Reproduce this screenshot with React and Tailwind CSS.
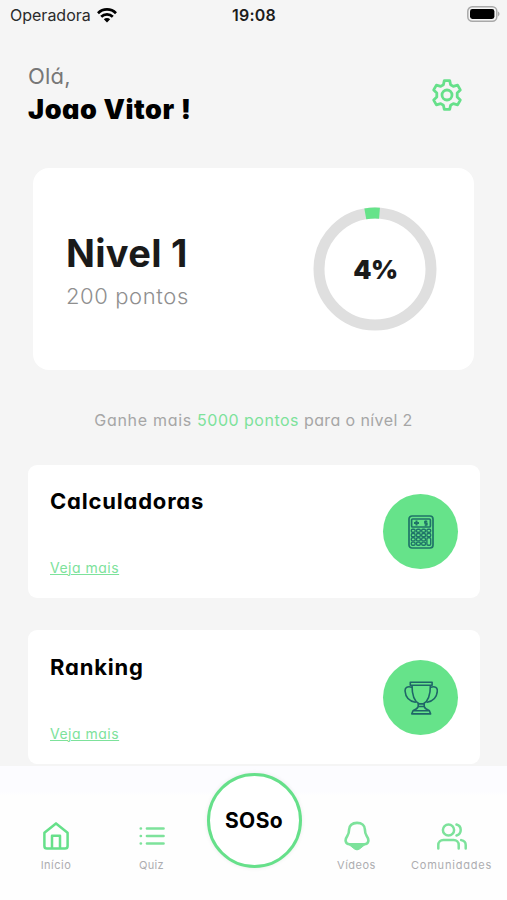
import React from "react";

function Wifi() {
  return (
    <svg width="20" height="15" viewBox="0 0 20 15" fill="none" stroke="#000" strokeWidth="2.7">
      <path d="M1 5.2a12.7 12.7 0 0 1 18 0" />
      <path d="M4.2 8.8a8.2 8.2 0 0 1 11.6 0" />
      <path d="M10 14.6 6.8 11.3a4.6 4.6 0 0 1 6.4 0Z" fill="#000" stroke="none" />
    </svg>
  );
}

function Battery() {
  return (
    <svg width="34" height="16" viewBox="0 0 34 16" fill="none">
      <rect x="1.8" y="0.8" width="29" height="14.4" rx="4.5" stroke="#a9a9a9" strokeWidth="1.5" />
      <rect x="4" y="3" width="24.4" height="10" rx="2.4" fill="#000" />
      <path d="M32 5.6v4.8c2-.9 2-3.900 0-4.800Z" fill="#a9a9a9" />
    </svg>
  );
}

function Gear() {
  return (
    <svg width="32" height="32" viewBox="0 0 32 32" fill="none" stroke="#66e08a" strokeWidth="2.8" strokeLinejoin="round">
      <path d="M13.3 1.6h5.4l.9 4.2 2.7 1.6 4.3-1.3 2.7 4.8-3.1 3v4.2l3.1 3-2.7 4.800-4.300-1.300-2.700 1.600-.9 4.200h-5.400l-.9-4.200-2.700-1.600-4.300 1.300-2.700-4.800 3.100-3v-4.200l-3.100-3 2.700-4.800 4.300 1.300 2.700-1.600Z" />
      <circle cx="16" cy="16" r="5" />
    </svg>
  );
}

function Calculator() {
  return (
    <svg width="26" height="34" viewBox="0 0 26 34" fill="none" stroke="#1f7468" strokeWidth="1.7">
      <rect x="1" y="1" width="24" height="32" rx="3" />
      <rect x="3.6" y="4" width="18.8" height="8" rx="1" />
      <path d="M6 8h5M8.5 5.6v4.8" strokeWidth="2" />
      <path d="M19.3 6.3h-2.6v1.8h2.4v1.9h-2.6M17.9 5.2v6" strokeWidth="1.2" />
      {[15.7, 20, 24.3, 28.6].map((y) =>
        [5.2, 10.4, 15.6, 20.8].map((x) =>
          x === 20.8 && y > 22 ? null : (
            <rect key={x + "-" + y} x={x - 1.9} y={y - 1.5} width="3.8" height="3.1" rx="1.2" strokeWidth="1.4" />
          )
        )
      )}
      <rect x="18.9" y="22.8" width="3.8" height="7.400" rx="1.2" strokeWidth="1.4" />
    </svg>
  );
}

function Trophy() {
  return (
    <svg width="34" height="34" viewBox="0 0 34 34" fill="none" stroke="#1f6668" strokeWidth="1.6" strokeLinejoin="round" strokeLinecap="round">
      <path d="M6.3 1.2h21.8v3H6.3zM8 4.2c0 8 1.200 15.500 7 18.600h4.400c5.800-3.100 7-10.600 7-18.600" />
      <path d="M7.600 6.200C3.200 5 .8 6.700 1.100 10.200c.4 5.400 4 9.800 10.200 11M26.800 6.200c4.400-1.200 6.800.5 6.500 4-.4 5.400-4 9.800-10.200 11" />
      <path d="M14.200 22.800h6v2.700h-6zM14.200 25.500c-.5 2.200-2.500 3-5.200 4.200h16.400c-2.700-1.200-4.700-2-5.200-4.200M9 29.700h16.400l1.200 3.200H7.800z" />
    </svg>
  );
}

function Home() {
  return (
    <svg width="26" height="28" viewBox="0 0 26 28" fill="none" stroke="#66e08a" strokeWidth="2.500" strokeLinejoin="round">
      <path d="M1.400 10.700 13 1.400l11.600 9.300v13.300a2.600 2.600 0 0 1-2.600 2.600H4A2.600 2.600 0 0 1 1.400 24Z" />
      <path d="M9 26.600V13.700h8v12.900" />
    </svg>
  );
}

function List() {
  return (
    <svg width="26" height="20" viewBox="0 0 26 20" fill="none" stroke="#7de29b" strokeWidth="2.700" strokeLinecap="round">
      <path d="M8 2.500h16.500M8 10h16.500M8 17.500h16.500M1.800 2.500h.1M1.800 10h.1M1.800 17.500h.1" />
    </svg>
  );
}

function Bell() {
  return (
    <svg width="26" height="30" viewBox="0 0 26 30" fill="none" stroke="#7de29b" strokeWidth="2.600" strokeLinejoin="round">
      <path d="M13 1.900c-4.900 0-7.900 2.700-7.900 6.700 0 3.300-.5 4.600-1.800 6.500-1.400 2-2 3.500-1.600 5.200.4 1.900 1.900 2.900 3.900 2.900h14.800c2 0 3.500-1 3.900-2.900.4-1.700-.2-3.200-1.600-5.200-1.300-1.900-1.800-3.200-1.800-6.500 0-4-3-6.700-7.900-6.700Z" />
      <path d="M4.500 23.200h17L15.500 28q-2.500 1.800-5 0Z" fill="#7de29b" strokeWidth="1" />
    </svg>
  );
}

function Users() {
  return (
    <svg width="30" height="27" viewBox="0 0 30 27" fill="none" stroke="#7de29b" strokeWidth="2.500" strokeLinecap="round">
      <circle cx="11.500" cy="7" r="5.600" />
      <path d="M19.500 1.500a5.700 5.700 0 0 1 0 11M1.300 25.500v-3.600a5 5 0 0 1 5-5h10.400a5 5 0 0 1 5 5v3.600M24.200 17.100c2.900.6 4.500 2.300 4.500 4.800v3.600" />
    </svg>
  );
}

function Card({ title, children, className }) {
  return (
    <section className={"mx-7 flex w-[452px] shrink-0 justify-between rounded-[9px] bg-white px-[22px] " + className}>
      <div className="flex flex-col items-start whitespace-nowrap pt-[22px]">
        <h2 className="text-[22px] font-bold leading-[28px] tracking-[0.8px] text-black">{title}</h2>
        <a className="mt-[43px] text-[14px] leading-[20px] tracking-[0.5px] text-[#7de29b] underline decoration-1 underline-offset-[1px]">Veja mais</a>
      </div>
      <div className="mt-[29px] flex size-[75px] items-center justify-center rounded-full bg-[#66e38a]">{children}</div>
    </section>
  );
}

function Tab({ label, labelClass, className, children }) {
  return (
    <div className={"flex shrink-0 flex-col items-center " + className}>
      <div className="flex h-[30px] items-center justify-center">{children}</div>
      <span className={"mt-[6px] whitespace-nowrap text-[11px] leading-[16px] text-[#adadb0] " + labelClass}>{label}</span>
    </div>
  );
}

export default function App() {
  return (
    <div className="flex h-[900px] w-[507px] flex-col overflow-hidden bg-[#f5f5f5] font-['Inter','Liberation_Sans',sans-serif] [font-feature-settings:'cv11'_1]">
      <header className="grid h-[30px] shrink-0 grid-cols-3 items-center pl-[10px] pr-[7px] [font-feature-settings:normal]">
        <div className="flex items-center gap-[6px] whitespace-nowrap text-[16px] text-[#2b2b2b]">
          <span>Operadora</span>
          <Wifi />
        </div>
        <span className="pr-[2px] text-center text-[16px] font-semibold tracking-[0.2px] text-[#1c1c1c]">19:08</span>
        <div className="flex justify-end pb-[2px]"><Battery /></div>
      </header>

      <div className="flex h-[137px] shrink-0 justify-between pl-7 pr-[44px]">
        <div className="whitespace-nowrap pt-[31px]">
          <p className="text-[22px] leading-[30px] tracking-[0.2px] text-[#777]">Olá,</p>
          <h1 className="mt-[2px] text-[27px] font-black leading-[34px] tracking-[0.55px] text-black">Joao Vitor !</h1>
        </div>
        <div className="pt-[49px]"><Gear /></div>
      </div>

      <section className="ml-[33px] mt-[1px] flex h-[202px] w-[441px] shrink-0 items-center justify-between rounded-[16px] bg-white pl-[33px] pr-[37px]">
        <div className="whitespace-nowrap pt-[2px]">
          <h2 className="text-[38px] font-bold leading-[48px] tracking-[0.3px] text-[#1a1a1a]">Nivel 1</h2>
          <p className="mt-[4px] text-[22px] font-light leading-[30px] tracking-[0.6px] text-[#8f8f8f]">200 pontos</p>
        </div>
        <div className="grid size-[124px] place-items-center">
          <svg className="col-start-1 row-start-1" width="124" height="124" viewBox="0 0 124 124" fill="none" strokeWidth="11">
            <circle cx="62" cy="62" r="56" stroke="#dfdfdf" />
            <path d="M52.300 6.850A56 56 0 0 1 66.500 6.180" stroke="#66e38a" />
          </svg>
          <span className="col-start-1 row-start-1 pl-px text-[26px] font-black tracking-[-0.5px] text-[#1a1a1a]">4%</span>
        </div>
      </section>

      <p className="mt-[38px] h-[24px] shrink-0 whitespace-nowrap text-center text-[16px] leading-[24px] tracking-[0.5px] text-[#a6a6a6]">
        <span className="tracking-[0.7px]">Ganhe mais </span><span className="text-[#7de29b]">5000 pontos</span><span className="tracking-[0.4px]"> para o nível 2</span>
      </p>

      <Card title="Calculadoras" className="mt-[33px] h-[133px]"><Calculator /></Card>
      <Card title="Ranking" className="mt-[32px] h-[134px] pt-px"><Trophy /></Card>

      <nav className="mt-[2px] flex h-[134px] shrink-0 bg-[linear-gradient(#fcfcff_0_26px,#fefefe_30px)]">
        <Tab label="Início" className="w-[112px] pt-[55px]" labelClass="tracking-[0.5px]"><Home /></Tab>
        <Tab label="Quiz" className="w-[79px] pt-[55px]" labelClass="tracking-[0.3px]"><List /></Tab>
        <div className="ml-[16px] mt-[7px] flex size-[95px] shrink-0 items-center justify-center rounded-full border-[3px] border-[#66e08a] bg-white pt-[1px] pr-px text-[21px] font-bold tracking-[0.4px] text-black shadow-[0_0_4px_rgba(0,0,0,0.08)]">SOSo</div>
        <Tab label="Vídeos" className="w-[109px] pt-[55px]" labelClass="tracking-[0.5px]"><Bell /></Tab>
        <Tab label="Comunidades" className="w-[81px] pt-[55px]" labelClass="tracking-[0.8px]"><Users /></Tab>
      </nav>
    </div>
  );
}
